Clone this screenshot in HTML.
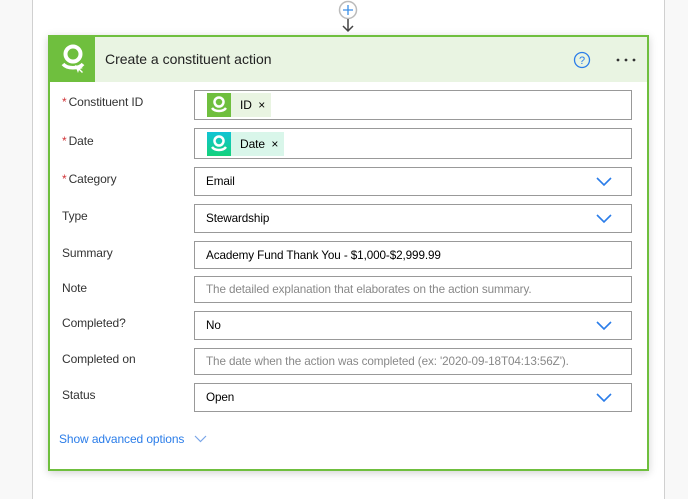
<!DOCTYPE html>
<html><head><meta charset="utf-8"><style>
*{box-sizing:border-box;margin:0;padding:0}
body{width:688px;height:499px;background:#f8f8f8;font-family:"Segoe UI","Liberation Sans",sans-serif;position:relative;overflow:hidden;font-size:12px;color:#000}
.col{position:absolute;left:32px;top:0;width:633px;height:499px;background:#fff;border-left:1px solid #d0d0d0;border-right:1px solid #d0d0d0}
.card{position:absolute;left:48px;top:35px;width:601px;height:436px;border:2px solid #6fbf3e;background:#fff;box-shadow:0 2px 8px rgba(0,0,0,.18)}
.hdr{position:absolute;left:0;top:0;width:597px;height:45px;background:#e9f4e2}
.hic{position:absolute;left:0;top:0;width:45px;height:45px;background:#6fbf3e}
.title{position:absolute;left:55px;top:14px;font-size:14px;color:#222}
.lbl{position:absolute;left:62px;font-size:12px;color:#333;letter-spacing:-0.1px}
.req{color:#d13438;margin-right:2px}
.in{position:absolute;left:194px;width:438px;border:1px solid #999;background:#fff;font-size:11.7px;letter-spacing:-0.1px;padding-left:11px;display:flex;align-items:center}
.ph{color:#888}
.chev{position:absolute;right:19px;top:50%;margin-top:-5px}
.tok{display:flex;align-items:center;height:24px;margin-left:-1px;padding-right:6px;font-size:12px}
.tok .ti{width:24px;height:24px;margin-right:9px}
</style></head><body>
<div class="col"></div>
<svg style="position:absolute;left:337px;top:0" width="22" height="34"><circle cx="11" cy="10" r="8.5" fill="#fff" stroke="#bbb" stroke-width="1.5"/><path d="M11 5v10M6 10h10" stroke="#3a8ee6" stroke-width="1.3"/><path d="M11 19v12M6 26l5 5 5-5" stroke="#444" stroke-width="1.5" fill="none"/></svg>
<div class="card">
<div class="hdr">
<div class="hic"><svg width="45" height="45"><circle cx="23" cy="17" r="7.5" fill="none" stroke="#fff" stroke-width="4"/><path d="M13 27c4 5 16 5 20 0" stroke="#fff" stroke-width="3.5" fill="none"/><path d="M25 28l8 3-3 1 3 3-1 1-3-3-1 3z" fill="#fff"/></svg></div>
<div class="title">Create a constituent action</div>
<svg style="position:absolute;left:523px;top:14px" width="18" height="18"><circle cx="9" cy="9" r="7.5" fill="none" stroke="#2b7de9" stroke-width="1.3"/><text x="9" y="13" text-anchor="middle" font-size="11" fill="#2b7de9" font-family="Liberation Sans">?</text></svg>
<svg style="position:absolute;left:565px;top:20px" width="22" height="6"><circle cx="3" cy="3" r="1.4" fill="#333"/><circle cx="11" cy="3" r="1.4" fill="#333"/><circle cx="19" cy="3" r="1.4" fill="#333"/></svg>
</div>
</div>
<div class="lbl" style="top:95px"><span class="req">*</span>Constituent ID</div>
<div class="lbl" style="top:134px"><span class="req">*</span>Date</div>
<div class="lbl" style="top:172px"><span class="req">*</span>Category</div>
<div class="lbl" style="top:209px">Type</div>
<div class="lbl" style="top:246px">Summary</div>
<div class="lbl" style="top:281px">Note</div>
<div class="lbl" style="top:316px">Completed?</div>
<div class="lbl" style="top:352px">Completed on</div>
<div class="lbl" style="top:388px">Status</div>

<div class="in" style="top:90px;height:30px;padding-left:13px"><div class="tok" style="background:#e9f4e2"><svg class="ti" viewBox="0 0 24 24" style="background:#6fbf3e"><circle cx="12" cy="9" r="4.5" fill="none" stroke="#fff" stroke-width="2.5"/><path d="M5 15c3 4 11 4 14 0" stroke="#fff" stroke-width="2.5" fill="none"/></svg>ID&nbsp;&nbsp;×</div></div>
<div class="in" style="top:128px;height:31px;padding-left:13px"><div class="tok" style="background:#d9f6ea"><svg class="ti" viewBox="0 0 24 24" style="background:linear-gradient(#11c3d6,#14d27a)"><circle cx="12" cy="9" r="4.5" fill="none" stroke="#fff" stroke-width="2.5"/><path d="M5 15c3 4 11 4 14 0" stroke="#fff" stroke-width="2.5" fill="none"/></svg>Date&nbsp;&nbsp;×</div></div>
<div class="in" style="top:167px;height:29px">Email<svg class="chev" width="16" height="10"><path d="M1 1l7 7 7-7" stroke="#2b7de9" stroke-width="1.6" fill="none"/></svg></div>
<div class="in" style="top:204px;height:29px">Stewardship<svg class="chev" width="16" height="10"><path d="M1 1l7 7 7-7" stroke="#2b7de9" stroke-width="1.6" fill="none"/></svg></div>
<div class="in" style="top:241px;height:28px">Academy Fund Thank You - $1,000-$2,999.99</div>
<div class="in" style="top:276px;height:27px"><span class="ph">The detailed explanation that elaborates on the action summary.</span></div>
<div class="in" style="top:311px;height:29px">No<svg class="chev" width="16" height="10"><path d="M1 1l7 7 7-7" stroke="#2b7de9" stroke-width="1.6" fill="none"/></svg></div>
<div class="in" style="top:348px;height:27px"><span class="ph">The date when the action was completed (ex: '2020-09-18T04:13:56Z').</span></div>
<div class="in" style="top:383px;height:29px">Open<svg class="chev" width="16" height="10"><path d="M1 1l7 7 7-7" stroke="#2b7de9" stroke-width="1.6" fill="none"/></svg></div>
<div style="position:absolute;left:59px;top:432px;color:#2b7de9;font-size:12px;letter-spacing:-0.1px">Show advanced options</div>
<svg style="position:absolute;left:194px;top:435px" width="13" height="8"><path d="M1 1l5.5 5.5L12 1" stroke="#7aa6e8" stroke-width="1.2" fill="none"/></svg>
</body></html>
